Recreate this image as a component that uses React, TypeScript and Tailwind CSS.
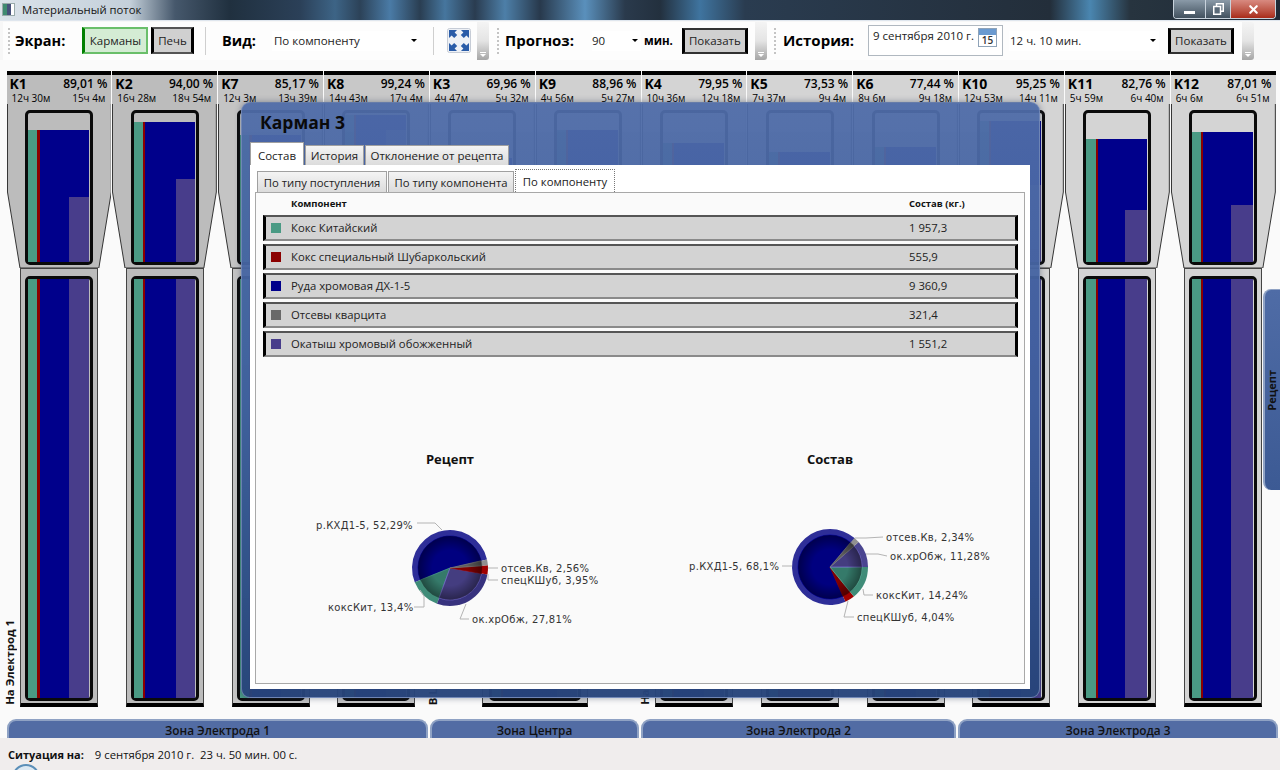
import { X } from "lucide-react";

const FONT = { fontFamily: '"Open Sans", "Noto Sans", sans-serif' };

interface Bin {
  name: string; pct: string; t1: string; t2: string; shade: string;
  top: number; purpleTop: number; green: number; red: number; purple: number;
}

const BINS: Bin[] = [
  { name: "K1", pct: "89,01 %", t1: "12ч 30м", t2: "15ч 4м", shade: "#bcbcbc", top: 130, purpleTop: 197, green: 9, red: 3, purple: 20 },
  { name: "K2", pct: "94,00 %", t1: "16ч 28м", t2: "18ч 54м", shade: "#bcbcbc", top: 122, purpleTop: 179, green: 9, red: 2, purple: 19 },
  { name: "K7", pct: "85,17 %", t1: "12ч 3м", t2: "13ч 39м", shade: "#c4c4c4", top: 135, purpleTop: 200, green: 9, red: 3, purple: 20 },
  { name: "K8", pct: "99,24 %", t1: "14ч 43м", t2: "17ч 4м", shade: "#c8c8c8", top: 115, purpleTop: 130, green: 9, red: 2, purple: 20 },
  { name: "K3", pct: "69,96 %", t1: "4ч 47м", t2: "5ч 32м", shade: "#d0d0d0", top: 158, purpleTop: 200, green: 9, red: 2, purple: 20 },
  { name: "K9", pct: "88,96 %", t1: "4ч 56м", t2: "5ч 27м", shade: "#d0d0d0", top: 130, purpleTop: 170, green: 9, red: 2, purple: 20 },
  { name: "K4", pct: "79,95 %", t1: "10ч 36м", t2: "12ч 18м", shade: "#d4d4d4", top: 143, purpleTop: 200, green: 9, red: 2, purple: 20 },
  { name: "K5", pct: "73,53 %", t1: "7ч 37м", t2: "9ч 4м", shade: "#d4d4d4", top: 152, purpleTop: 205, green: 9, red: 2, purple: 20 },
  { name: "K6", pct: "77,44 %", t1: "8ч 6м", t2: "9ч 18м", shade: "#d4d4d4", top: 147, purpleTop: 205, green: 9, red: 2, purple: 20 },
  { name: "K10", pct: "95,25 %", t1: "12ч 53м", t2: "14ч 11м", shade: "#d4d4d4", top: 121, purpleTop: 185, green: 9, red: 2, purple: 20 },
  { name: "K11", pct: "82,76 %", t1: "5ч 59м", t2: "6ч 40м", shade: "#d4d4d4", top: 139, purpleTop: 210, green: 10, red: 2, purple: 22 },
  { name: "K12", pct: "87,01 %", t1: "6ч 6м", t2: "6ч 51м", shade: "#d4d4d4", top: 132, purpleTop: 205, green: 9, red: 2, purple: 22 },
];

const ROWS = [
  { color: "#4a9a84", name: "Кокс Китайский", value: "1 957,3" },
  { color: "#8b0000", name: "Кокс специальный Шубаркольский", value: "555,9" },
  { color: "#00008b", name: "Руда хромовая ДХ-1-5", value: "9 360,9" },
  { color: "#696969", name: "Отсевы кварцита", value: "321,4" },
  { color: "#483d8b", name: "Окатыш хромовый обожженный", value: "1 551,2" },
];

// Fill of a bin: green and red strips on the left, blue with the purple layer at lower right.
function Fill({ height, purpleHeight, b }: { height: number; purpleHeight: number; b: Bin }) {
  return (
    <div className="flex h-full flex-col justify-end pr-px">
      <div className="flex" style={{ height }}>
        <div className="bg-[#4a9a84]" style={{ width: b.green }} />
        <div className="bg-[#8b0000]" style={{ width: b.red }} />
        <div className="flex flex-1 flex-col items-end justify-end bg-[#00008b]">
          <div className="bg-[#483d8b]" style={{ width: b.purple, height: purpleHeight }} />
        </div>
      </div>
    </div>
  );
}

function Upper({ b }: { b: Bin }) {
  return (
    <div className="flex h-[197px] flex-col px-[0.5px]">
      <div className="h-[33px] border-t-4 border-black pl-[3px] pr-[4px] text-black" style={{ backgroundColor: b.shade }}>
        <div className="flex items-center justify-between leading-[17px]">
          <span className="text-[14px] font-bold">{b.name}</span>
          <span className="text-[12px] font-semibold">{b.pct}</span>
        </div>
        <div className="flex justify-between px-[2px] text-[10px] leading-[13px]">
          <span>{b.t1}</span>
          <span>{b.t2}</span>
        </div>
      </div>
      <div className="relative flex h-[164px] justify-center pt-[6px]">
        <svg className="absolute inset-0 h-full w-full" viewBox="0 0 105 164" preserveAspectRatio="none">
          <polygon points="0.5,-1 104.5,-1 104.5,88 92,164 13,164 0.5,88" fill={b.shade} stroke="#333" strokeWidth="1" />
        </svg>
        <div className="relative h-[155px] w-[68px] rounded-[5px] border-[3px] border-[#0a0a0a]">
          <Fill height={262 - b.top} purpleHeight={262 - b.purpleTop} b={b} />
        </div>
      </div>
    </div>
  );
}

function Lower({ b, wide }: { b: Bin; wide?: boolean }) {
  return (
    <div
      className={`mx-auto flex h-[439px] flex-col items-center border-x border-t border-[#444] border-b-4 border-b-black pt-[7px] ${wide ? "w-[106px]" : "w-[78px]"}`}
      style={{ backgroundColor: b.shade }}
    >
      <div className={`h-[425px] rounded-[5px] border-[3px] border-[#0a0a0a] ${wide ? "w-[92px]" : "w-[68px]"}`}>
        <Fill height={419} purpleHeight={419} b={b} />
      </div>
    </div>
  );
}

function Gripper() {
  return (
    <div className="relative h-[38px] w-[12px] rounded-r-[3px] bg-gradient-to-b from-[#f4f4f4] via-[#e4e4e4] to-[#a6a6a6]">
      <div className="absolute bottom-[3px] left-[3px] h-0 w-0 border-x-[3px] border-t-[3px] border-x-transparent border-t-white" />
      <div className="absolute bottom-[7px] left-[3px] h-px w-[6px] bg-white" />
    </div>
  );
}

function Dots() {
  return <div className="h-[26px] w-0 border-l-2 border-dotted border-[#c4c4c4]" />;
}

function Caret() {
  return <div className="h-0 w-0 border-x-[3px] border-t-[3px] border-x-transparent border-t-black" />;
}

function ShowButton({ className }: { className: string }) {
  return (
    <div className={`flex h-[26px] w-[66px] items-center justify-center border-x-[3px] border-y-2 border-x-black border-y-[#333] bg-[#d0d0d0] text-[11.5px] text-[#222] ${className}`}>
      Показать
    </div>
  );
}

function ExpandIcon() {
  return (
    <svg width="24" height="25" viewBox="0 0 24 25">
      <rect x="0.5" y="0.5" width="23" height="24" rx="2" fill="#eef1f6" stroke="#c6ccd6" />
      <path d="M2 2h8l-2.4 2.4 2.6 2.6-3 3-2.6-2.6L2 10z" fill="#2a5ca8" />
      <path d="M22 2h-8l2.4 2.4-2.6 2.6 3 3 2.6-2.6L22 10z" fill="#2a5ca8" />
      <path d="M2 23h8l-2.4-2.4 2.6-2.6-3-3-2.6 2.6L2 15z" fill="#2a5ca8" />
      <path d="M22 23h-8l2.4-2.4-2.6-2.6 3-3 2.6 2.6L22 15z" fill="#2a5ca8" />
    </svg>
  );
}

function TitleBar() {
  return (
    <div className="relative flex h-[21px] shrink-0 items-start border-b border-[#dfe6ee] bg-[linear-gradient(90deg,#dbe3ea_0px,#c4d0da_130px,#46586c_175px,#20303f_230px,#2b4058_300px,#3d6486_335px,#2c4258_360px,#4a7ba6_390px,#2a3e52_420px,#46769e_445px,#2a3c50_475px,#4d7fa8_505px,#28394c_540px,#5a90bc_585px,#2a3a4c_625px,#23303e_660px,#3f749f_700px,#2a3c50_745px,#232e3a_1050px,#4a86b0_1090px,#27343f_1130px,#1f2a36_1280px)]">
      <div className="ml-[2px] mt-[3px] flex h-[13px] w-[13px] border border-[#9aa] bg-white">
        <div className="w-[4px] bg-[#3f8a70]" />
        <div className="w-[4px] bg-[#46507a]" />
      </div>
      <span className="ml-[7px] mt-[2px] text-[11.3px] leading-[16px] text-[#151515]">Материальный поток</span>
      <div className="absolute right-[4px] top-0 flex h-[19px] w-[103px] overflow-hidden rounded-b-[4px] border border-t-0 border-[#c8d2dc]">
        <div className="flex w-[31px] items-end justify-center bg-gradient-to-b from-[#8a9aa8] to-[#43525f] pb-[4px]">
          <div className="h-[3px] w-[11px] bg-white" />
        </div>
        <div className="flex w-[26px] items-center justify-center border-x border-[#c8d2dc] bg-gradient-to-b from-[#8a9aa8] to-[#43525f]">
          <svg width="11" height="12" viewBox="0 0 11 12">
            <rect x="3.5" y="0.75" width="6.75" height="7.5" fill="none" stroke="#fff" strokeWidth="1.5" />
            <rect x="0.75" y="3.5" width="6.75" height="7.75" fill="#5a6a78" stroke="#fff" strokeWidth="1.5" />
          </svg>
        </div>
        <div className="flex flex-1 items-center justify-center bg-gradient-to-b from-[#d88a80] to-[#a82a18]">
          <X size={13} strokeWidth={4} className="text-white" />
        </div>
      </div>
    </div>
  );
}

function Toolbar() {
  return (
    <div className="flex h-[39px] shrink-0 items-center bg-[#f7f7f7] pl-[3px] text-black">
      <div className="flex h-[38px] w-[474px] items-center bg-[#fdfdfd]">
        <div className="ml-[5px]"><Dots /></div>
        <span className="ml-[5px] w-[67px] text-[14.5px] font-bold">Экран:</span>
        <div className="flex h-[27px] w-[66px] items-center justify-center border-2 border-[#6abf6a] border-l-[3px] border-l-[#008000] bg-[#d4ecd4] text-[11.5px] text-[#222]">Карманы</div>
        <div className="ml-[3px] flex h-[27px] w-[43px] items-center justify-center border-x-[3px] border-y-2 border-x-black border-y-[#555] bg-[#d0d0d0] text-[11.5px] text-[#222]">Печь</div>
        <div className="ml-[11px] h-[28px] w-px bg-[#cfcfcf]" />
        <span className="ml-[16px] w-[50px] text-[14.5px] font-bold">Вид:</span>
        <div className="flex h-[20px] w-[148px] items-center justify-between bg-white pr-[3px] text-[11.5px] text-[#222]">
          <span className="pl-[2px]">По компоненту</span>
          <Caret />
        </div>
        <div className="ml-[13px] h-[28px] w-px bg-[#cfcfcf]" />
        <div className="ml-[13px]"><ExpandIcon /></div>
      </div>
      <Gripper />
      <div className="flex h-[38px] w-[266px] items-center bg-[#fdfdfd]">
        <div className="ml-[8px]"><Dots /></div>
        <span className="ml-[6px] w-[87px] text-[15px] font-bold">Прогноз:</span>
        <div className="flex h-[20px] w-[49px] items-center justify-between bg-white pr-[3px] text-[11.5px] text-[#222]">
          <span>90</span>
          <Caret />
        </div>
        <span className="ml-[3px] text-[11.5px] font-bold">мин.</span>
        <ShowButton className="ml-[9px]" />
      </div>
      <Gripper />
      <div className="flex h-[38px] w-[475px] items-center bg-[#fdfdfd]">
        <div className="ml-[7px]"><Dots /></div>
        <span className="ml-[7px] w-[85px] text-[15px] font-bold">История:</span>
        <div className="flex h-[31px] w-[135px] items-start justify-between border border-[#b0b8c0] bg-white pl-[4px] pr-[5px] pt-[2px] text-[11.5px] text-[#222]">
          <span className="leading-[16px]">9 сентября 2010 г.</span>
          <div className="h-[19px] w-[19px] border border-[#8fa3b8] bg-white text-center text-[10px] font-semibold leading-[11px] text-[#333]">
            <div className="h-[6px] bg-[#6a9ad0]" />
            15
          </div>
        </div>
        <div className="ml-[6px] flex h-[20px] w-[150px] items-center justify-between bg-white pr-[3px] text-[11.5px] text-[#222]">
          <span className="pl-[1px]">12 ч. 10 мин.</span>
          <Caret />
        </div>
        <ShowButton className="ml-[9px]" />
      </div>
      <Gripper />
    </div>
  );
}

function Slice({ a0, a1, r, fill, stroke }: { a0: number; a1: number; r: number; fill: string; stroke?: string }) {
  const rad = (a: number) => (a * Math.PI) / 180;
  const x0 = r * Math.cos(rad(a0));
  const y0 = r * Math.sin(rad(a0));
  const x1 = r * Math.cos(rad(a1));
  const y1 = r * Math.sin(rad(a1));
  const large = a1 - a0 > 180 ? 1 : 0;
  return <path d={`M0 0L${x0} ${y0}A${r} ${r} 0 ${large} 1 ${x1} ${y1}Z`} fill={fill} stroke={stroke} strokeWidth={stroke ? 0.8 : 0} />;
}

interface PieSlice { a0: number; a1: number; ring: string; inner: string; edge: string }
interface PieLabel { x: number; y: number; text: string; line: string }

function Pie({ cx, cy, slices, labels }: { cx: number; cy: number; slices: PieSlice[]; labels: PieLabel[] }) {
  return (
    <>
      <g transform={`translate(${cx} ${cy})`}>
        {slices.map((s, i) => <Slice key={i} a0={s.a0} a1={s.a1} r={38} fill={s.ring} />)}
        {slices.map((s, i) => <Slice key={i} a0={s.a0} a1={s.a1} r={32} fill={s.inner} stroke={s.edge} />)}
        <circle r="32" fill="url(#pieShade)" />
      </g>
      {labels.map((l, i) => (
        <g key={i}>
          <polyline points={l.line} fill="none" stroke="#b4b4b4" strokeWidth="1" />
          <text x={l.x} y={l.y} fontSize="10" fill="#333" letterSpacing="0.3" fontFamily='"DejaVu Sans", sans-serif'>{l.text}</text>
        </g>
      ))}
    </>
  );
}

function Charts() {
  return (
    <svg className="absolute left-[-1px] top-[239px] h-[250px] w-[770px]" viewBox="255 432 770 250">
      <defs>
        <radialGradient id="pieShade">
          <stop offset="0.55" stopColor="#000" stopOpacity="0" />
          <stop offset="1" stopColor="#000" stopOpacity="0.4" />
        </radialGradient>
      </defs>
      <Pie
        cx={450}
        cy={568}
        slices={[
          { a0: 158, a1: 347, ring: "#2e2e98", inner: "#000080", edge: "#00008b" },
          { a0: 110, a1: 158, ring: "#3f8c78", inner: "#357a6a", edge: "#4a9a84" },
          { a0: 10, a1: 110, ring: "#37327e", inner: "#443d80", edge: "#7468cc" },
          { a0: -4, a1: 10, ring: "#a00000", inner: "#800000", edge: "#8b0000" },
          { a0: -13, a1: -4, ring: "#909090", inner: "#5c5c5c", edge: "#777777" },
        ]}
        labels={[
          { x: 316, y: 529, text: "р.КХД1-5, 52,29%", line: "417,523 435,523 442,530" },
          { x: 501, y: 572, text: "отсев.Кв, 2,56%", line: "488,568 498,568" },
          { x: 501, y: 584, text: "спецКШуб, 3,95%", line: "488,574 488,580 498,580" },
          { x: 328, y: 611, text: "коксКит, 13,4%", line: "414,607 424,607 424,596 420,590" },
          { x: 472, y: 623, text: "ок.хрОбж, 27,81%", line: "466,604 460,619 469,619" },
        ]}
      />
      <Pie
        cx={830}
        cy={567}
        slices={[
          { a0: 66, a1: 311, ring: "#2e2e98", inner: "#000080", edge: "#0000a0" },
          { a0: 51, a1: 66, ring: "#a00000", inner: "#800000", edge: "#8b0000" },
          { a0: 0, a1: 51, ring: "#3f8c78", inner: "#357a6a", edge: "#5ab09a" },
          { a0: -41, a1: 0, ring: "#4a4590", inner: "#443d80", edge: "#7468cc" },
          { a0: -50, a1: -41, ring: "#909090", inner: "#5c5c5c", edge: "#777777" },
        ]}
        labels={[
          { x: 886, y: 541, text: "отсев.Кв, 2,34%", line: "855,538 866,538 883,537" },
          { x: 890, y: 560, text: "ок.хрОбж, 11,28%", line: "866,554 878,554 887,556" },
          { x: 876, y: 599, text: "коксКит, 14,24%", line: "863,589 864,595 873,595" },
          { x: 857, y: 621, text: "спецКШуб, 4,04%", line: "848,601 844,617 854,617" },
          { x: 689, y: 570, text: "р.КХД1-5, 68,1%", line: "782,566 792,566" },
        ]}
      />
      <text x={450} y={464} textAnchor="middle" fontSize="13" fontWeight="700" fill="#111">Рецепт</text>
      <text x={830} y={464} textAnchor="middle" fontSize="13" fontWeight="700" fill="#111">Состав</text>
    </svg>
  );
}

function Dialog() {
  return (
    <div className="absolute left-[241px] top-[102px] h-[596px] w-[799px] rounded-[9px] border border-[#7f93bc]/70 bg-gradient-to-b from-[#4f6ca8]/[0.95] via-[#3f5f9e]/[0.96] to-[#27447a]/[0.97] pl-[8px] pr-[9px] shadow-[0_0_6px_rgba(40,50,80,0.45)]">
      <div className="pl-[10px] pt-[7px] text-[17.5px] font-bold leading-[24px] text-[#0a0a0a]">Карман 3</div>
      <div className="mt-[8px] flex h-[23px] items-end text-[11.5px] text-[#222]">
        <div className="flex h-[23px] w-[54px] items-center justify-center border border-b-0 border-[#a0a0a0] bg-white pt-[4px]">Состав</div>
        <div className="ml-px flex h-[20px] w-[59px] items-center justify-center border border-b-0 border-[#a0a0a0] bg-gradient-to-b from-[#f4f4f4] to-[#dcdcdc] pt-px">История</div>
        <div className="ml-px flex h-[20px] w-[144px] items-center justify-center border border-b-0 border-[#a0a0a0] bg-gradient-to-b from-[#f4f4f4] to-[#dcdcdc] pt-px">Отклонение от рецепта</div>
      </div>
      <div className="h-[524px] w-[780px] bg-white px-[5px]">
        <div className="flex h-[27px] items-end pl-[2px] text-[11.3px] text-[#222]">
          <div className="flex h-[21px] w-[130px] items-center justify-center border border-b-0 border-[#a0a0a0] bg-gradient-to-b from-[#f4f4f4] to-[#dcdcdc] pt-[2px]">По типу поступления</div>
          <div className="ml-px flex h-[21px] w-[126px] items-center justify-center border border-b-0 border-[#a0a0a0] bg-gradient-to-b from-[#f4f4f4] to-[#dcdcdc] pt-[2px]">По типу компонента</div>
          <div className="ml-px flex h-[23px] w-[100px] items-center justify-center border border-b-0 border-dotted border-[#777] bg-white pt-[2px]">По компоненту</div>
        </div>
        <div className="relative h-[492px] w-[770px] border border-[#a8a8a8] bg-[#fafafa]">
          <div className="flex h-[22px] items-center pl-[35px] text-[9.5px] font-bold text-[#111]">
            <span className="w-[618px]">Компонент</span>
            <span>Состав (кг.)</span>
          </div>
          <div className="flex flex-col gap-[3px] pl-[7px]">
            {ROWS.map((r) => (
              <div key={r.name} className="flex h-[26px] w-[755px] items-center border-x-[3px] border-y-2 border-x-black border-b-[#8a8a8a] border-t-[#555] bg-[#d3d3d3] text-[11.3px] text-[#222]">
                <div className="ml-[5px] h-[10px] w-[10px]" style={{ backgroundColor: r.color }} />
                <span className="ml-[10px] w-[618px]">{r.name}</span>
                <span>{r.value}</span>
              </div>
            ))}
          </div>
          <Charts />
        </div>
      </div>
    </div>
  );
}

export default function App() {
  return (
    <div className="relative flex h-[770px] w-[1280px] flex-col overflow-hidden bg-[#fafafa]" style={FONT}>
      <TitleBar />
      <Toolbar />
      <div className="mt-[11px] grid h-[636px] w-[1270px] shrink-0 translate-x-[6px] grid-cols-12">
        {BINS.map((b) => <Upper key={b.name} b={b} />)}
        <Lower b={BINS[0]} />
        <Lower b={BINS[1]} />
        <Lower b={BINS[2]} />
        <Lower b={BINS[3]} />
        <div className="col-span-2"><Lower b={BINS[4]} wide /></div>
        <Lower b={BINS[6]} />
        <Lower b={BINS[7]} />
        <Lower b={BINS[8]} />
        <Lower b={BINS[9]} />
        <Lower b={BINS[10]} />
        <Lower b={BINS[11]} />
      </div>

      <div className="mt-[12px] flex h-[19px] shrink-0 gap-[2px] overflow-hidden pl-[7px] text-[11.8px] font-semibold leading-[19px] text-[#111]">
        <div className="h-[24px] w-[421px] rounded-t-[9px] border-x-2 border-t-2 border-[#8fa2c4] bg-[#526ca4] text-center">Зона Электрода 1</div>
        <div className="h-[24px] w-[209px] rounded-t-[9px] border-x-2 border-t-2 border-[#8fa2c4] bg-[#526ca4] text-center">Зона Центра</div>
        <div className="h-[24px] w-[315px] rounded-t-[9px] border-x-2 border-t-2 border-[#8fa2c4] bg-[#526ca4] text-center">Зона Электрода 2</div>
        <div className="h-[24px] w-[320px] rounded-t-[9px] border-x-2 border-t-2 border-[#8fa2c4] bg-[#526ca4] text-center">Зона Электрода 3</div>
      </div>

      <div className="relative flex-1 bg-[#f0eded] pl-[8px] pt-[9px] text-[11.3px] leading-[15px] text-[#111]">
        <span className="text-[11px] font-bold">Ситуация на:</span>
        <span className="ml-[11px]">9 сентября 2010 г.&nbsp;&nbsp;23 ч. 50 мин. 00 с.</span>
        <div className="absolute left-[12px] top-[26px] h-[28px] w-[28px] rounded-full border-2 border-[#5b8fb8] bg-[#dce8f2]" />
      </div>

      <span className="absolute bottom-[65px] left-[3px] rotate-180 text-[11.4px] font-bold leading-[14px] text-[#111] [writing-mode:vertical-rl]">На Электрод 1</span>
      <span className="absolute bottom-[65px] left-[426px] rotate-180 text-[11.4px] font-bold leading-[14px] text-[#111] [writing-mode:vertical-rl]">В Центр</span>
      <span className="absolute bottom-[65px] left-[638px] rotate-180 text-[11.4px] font-bold leading-[14px] text-[#111] [writing-mode:vertical-rl]">На Электрод 2</span>

      <Dialog />

      <div className="absolute left-[1263px] top-[289px] flex h-[201px] w-[17px] items-center justify-center rounded-l-[8px] border-l-2 border-t border-[#8fa2c4] bg-gradient-to-b from-[#4f6ca6] to-[#3c5a94]">
        <span className="rotate-180 text-[11px] font-bold text-[#111] [writing-mode:vertical-rl]">Рецепт</span>
      </div>
    </div>
  );
}
